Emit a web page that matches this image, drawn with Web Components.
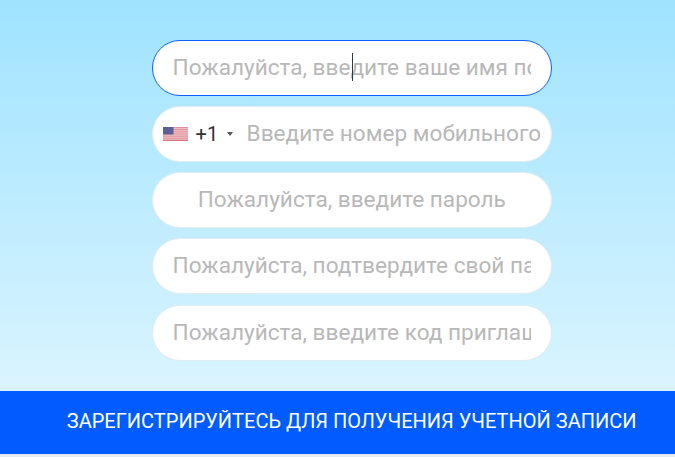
<!DOCTYPE html>
<html lang="ru"><head><meta charset="utf-8">
<style>
html,body{margin:0;padding:0;height:100%}
body{width:675px;height:457px;overflow:hidden;background:#e4ecf1;font-family:Roboto,"Liberation Sans",sans-serif}
</style></head><body>
<signup-page>
<text-field focused caret-at="179">Пожалуйста, введите ваше имя пользователя</text-field>
<phone-field>Введите номер мобильного телефона</phone-field>
<text-field center>Пожалуйста, введите пароль</text-field>
<text-field>Пожалуйста, подтвердите свой пароль</text-field>
<text-field style="margin-top:1px">Пожалуйста, введите код приглашения</text-field>
<submit-bar slot="bar">ЗАРЕГИСТРИРУЙТЕСЬ ДЛЯ ПОЛУЧЕНИЯ УЧЕТНОЙ ЗАПИСИ</submit-bar>
</signup-page>
<script>
function def(name,html,extra){
  customElements.define(name,class extends HTMLElement{
    constructor(){super();this.attachShadow({mode:'open'}).innerHTML=html;}
    connectedCallback(){if(extra)extra(this);}
  });
}
def('signup-page',`<style>
:host{display:flex;flex-direction:column;width:675px;height:454px;background:linear-gradient(180deg,#9fe3ff 0%,#daf4ff 86%)}
.form{flex:none;height:391px;box-sizing:border-box;padding:40px 0 0 152px;display:flex;flex-direction:column;align-items:flex-start;gap:10px}
</style><div class="form"><slot></slot></div><slot name="bar"></slot>`);
const pill=`:host{display:flex;flex:none;align-items:center;box-sizing:border-box;width:400px;height:56px;background:#fff;border:1px solid #dfecf3;border-radius:28px;font-size:22.6px;color:#b8b8b8;line-height:28px}`;
def('text-field',`<style>${pill}
:host{padding:0 20px 0 19.6px;position:relative}
:host([focused]){border-color:#0d60ff}
:host([center]) .t{text-align:center}
.t{flex:1;min-width:0;overflow:hidden;white-space:nowrap}
.c{position:absolute;top:12px;width:1px;height:28px;background:#2a3a4a;display:none}
:host([focused]) .c{display:block}
</style><div class="t"><slot></slot></div><i class="c"></i>`,el=>{
  const c=el.shadowRoot.querySelector('.c');const a=el.getAttribute('caret-at');if(a)c.style.left=(+a+20)+'px';
});
def('phone-field',`<style>${pill}
:host{padding:0 11px 0 10px}
.flag{flex:none;width:25px;height:14px;display:block;margin-right:1px}
.code{color:#333;margin-left:6.6px;font-size:20px}
.arr{flex:none;width:0;height:0;border-left:3px solid transparent;border-right:3px solid transparent;border-top:4px solid #555;margin:0 13.4px 0 9px}
.t{flex:1;min-width:0;overflow:hidden;white-space:nowrap}
</style>
<svg class="flag" viewBox="0 0 25 14" preserveAspectRatio="none">
<rect width="25" height="14" fill="#eec4c8"/>
<g fill="#e0939c"><rect y="0" width="25" height="1.1"/><rect y="2.1" width="25" height="1.1"/><rect y="4.3" width="25" height="1.1"/><rect y="6.4" width="25" height="1.1"/><rect y="8.6" width="25" height="1.1"/><rect y="10.7" width="25" height="1.1"/><rect y="12.8" width="25" height="1.2" fill="#d4737c"/></g>
<rect width="10.5" height="7.5" fill="#5a5f96"/>
</svg><span class="code">+1</span><span class="arr"></span><div class="t"><slot></slot></div>`);
def('submit-bar',`<style>
:host{display:block;box-sizing:border-box;width:675px;height:63px;background:#005cff;color:#fff;font-size:20px;line-height:61.5px;padding-left:66.8px;white-space:nowrap}
</style><slot></slot>`);
</script>
</body></html>
